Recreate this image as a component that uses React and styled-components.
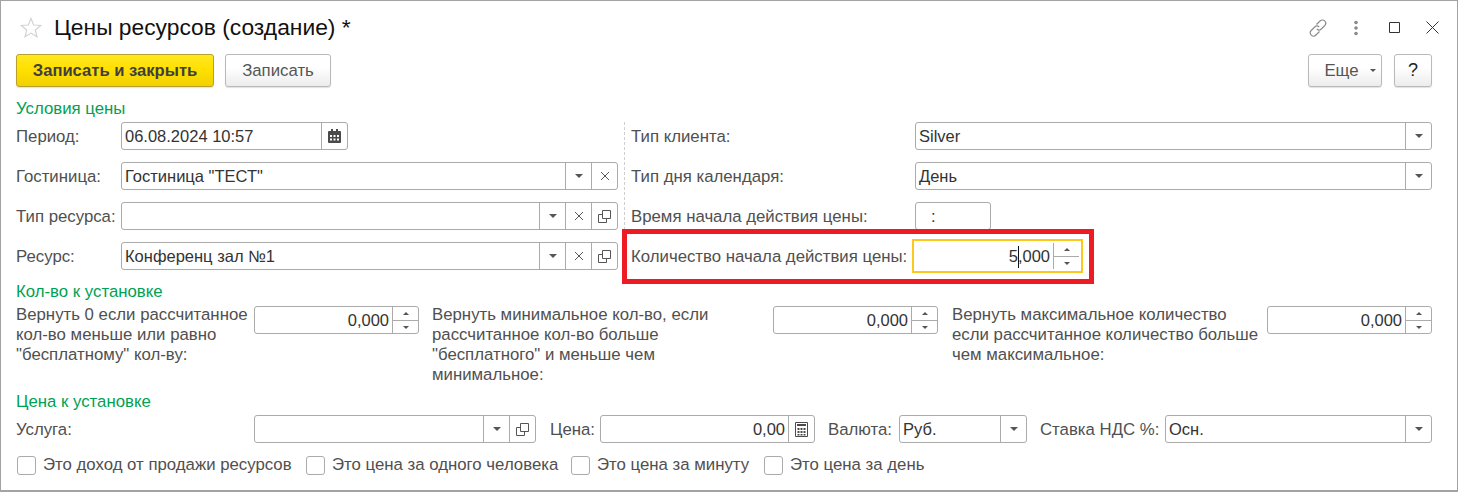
import React from "react";
import styled, { createGlobalStyle } from "styled-components";

const Global = createGlobalStyle`
  html, body { margin: 0; padding: 0; background: #fff; }
  * { box-sizing: border-box; }
  body { font-family: "Liberation Sans", Arial, sans-serif; font-size: 16.8px; color: #505050; }
`;

const Window = styled.div`
  width: 1458px;
  height: 492px;
  border: 1px solid #a3a3a3;
  border-bottom-width: 2px;
  padding: 0 25px 0 15px;
  overflow: hidden;
`;
const Header = styled.div`
  height: 53px;
  display: flex;
  align-items: center;
  padding-left: 4px;
`;
const Title = styled.h1`
  margin: 0 0 0 12px;
  font-size: 22.8px;
  font-weight: 400;
  color: #111;
  flex: 1;
  white-space: nowrap;
`;
const WinIcons = styled.div`
  display: flex;
  align-items: center;
  margin-right: -19px;
`;
const WinIcon = styled.div`
  width: 38px;
  height: 20px;
  display: flex;
  align-items: center;
  justify-content: center;
`;
const Toolbar = styled.div`
  display: flex;
  height: 33px;
`;
const Button = styled.div`
  height: 33px;
  display: flex;
  align-items: center;
  justify-content: center;
  gap: 11px;
  width: ${(p) => p.$w}px;
  margin-left: ${(p) => p.$ml || 0}px;
  padding-left: ${(p) => p.$pl || 0}px;
  border: 1px solid #b9b9b9;
  border-radius: 3px;
  background: linear-gradient(#fff 40%, #ececec);
  box-shadow: 0 1px 1px rgba(0, 0, 0, 0.12);
  color: #555;
  white-space: nowrap;
`;
const PrimaryButton = styled(Button)`
  border-color: #b8a12a;
  background: linear-gradient(#ffe81f, #ffdf00 50%, #f1d000);
  font-size: 16.6px;
  font-weight: 700;
  color: #3f3f3f;
`;
const HelpButton = styled(Button)`
  font-size: 18px;
  color: #222;
`;
const Spacer = styled.div`
  flex: 1;
`;
const Heading = styled.div`
  color: #00a152;
  height: 17px;
  line-height: 17px;
  margin-top: ${(p) => p.$mt}px;
`;
const Conditions = styled.div`
  display: grid;
  grid-template-columns: 602px 1fr;
  margin-top: 5px;
`;
const Column = styled.div`
  display: flex;
  flex-direction: column;
  gap: 12px;
  padding-bottom: 4px;
`;
const RightColumn = styled(Column)`
  position: relative;
  margin-left: 6px;
  padding-left: 6px;
  border-left: 1px dashed #cfcfcf;
  margin-bottom: 4px;
  padding-bottom: 0;
`;
const Row = styled.div`
  display: grid;
  grid-template-columns: ${(p) => p.$cols};
  height: 28px;
  align-items: center;
`;
const PriceRow = styled(Row)`
  margin-top: 5px;
`;
const Label = styled.div`
  padding-left: ${(p) => p.$pl ?? 0}px;
  padding-top: 2px;
  white-space: nowrap;
`;
const Field = styled.div`
  display: flex;
  height: 28px;
  width: ${(p) => (p.$w ? p.$w + "px" : "auto")};
  border: 1px solid #ababab;
  border-radius: 3px;
  background: #fff;
`;
const FocusField = styled(Field)`
  border: 2px solid #fcc81e;
  border-radius: 0;
  height: 34px;
  margin: -3px 0 -3px -3px;
`;
const Value = styled.div`
  flex: 1;
  min-width: 0;
  padding: 0 3px 0 ${(p) => p.$pl ?? 3}px;
  font-size: 16.5px;
  line-height: 26px;
  color: #333;
  white-space: nowrap;
  text-align: ${(p) => (p.$right ? "right" : "left")};
`;
const FocusValue = styled(Value)`
  line-height: 30px;
`;
const Addon = styled.div`
  width: 26px;
  flex: none;
  border-left: 1px solid #ababab;
  display: flex;
  align-items: center;
  justify-content: center;
`;
const Spin = styled.div`
  width: 26px;
  flex: none;
  border-left: 1px solid #ababab;
  display: grid;
  grid-template-rows: 1fr 1fr;
`;
const FocusSpin = styled(Spin)`
  margin: 2px 2px 2px 0;
`;
const SpinPart = styled.div`
  display: flex;
  align-items: center;
  justify-content: center;
  border-top: ${(p) => (p.$sep ? "1px solid #ababab" : "none")};
`;
const Caret = styled.span`
  display: inline-block;
  width: 1px;
  height: 22px;
  margin-right: -1px;
  vertical-align: -6px;
  background: #111;
`;
const Highlight = styled.div`
  position: absolute;
  left: -3px;
  top: 107px;
  width: 472px;
  height: 55px;
  border: 5px solid #ed1c24;
  pointer-events: none;
`;
const Quantities = styled.div`
  display: grid;
  grid-template-columns: 238px 165px 354px 165px 329px 165px;
  height: 93px;
  padding-top: 6px;
`;
const MultiLabel = styled.div`
  line-height: 20px;
  margin-top: -1px;
  padding-left: ${(p) => p.$pl || 0}px;
  white-space: pre-line;
`;
const Checks = styled.div`
  display: flex;
  align-items: center;
  height: 20px;
  margin-top: 12px;
  padding-left: 1px;
`;
const CheckItem = styled.div`
  display: flex;
  align-items: center;
  width: ${(p) => p.$w}px;
  white-space: nowrap;
`;
const Box = styled.span`
  width: 19px;
  height: 19px;
  border: 1px solid #ababab;
  border-radius: 3px;
  margin-right: 7px;
  flex: none;
`;

const Tri = () => (
  <svg width="8" height="4" viewBox="0 0 8 4">
    <path d="M0 0H8L4 4Z" fill="#555" />
  </svg>
);
const Small = ({ up }) => (
  <svg width="6" height="3" viewBox="0 0 6 3">
    <path d={up ? "M0 3L3 0L6 3Z" : "M0 0H6L3 3Z"} fill="#555" />
  </svg>
);
const Cross = () => (
  <svg width="10" height="10" viewBox="0 0 10 10">
    <path d="M1 1L9 9M9 1L1 9" stroke="#555" strokeWidth="1" fill="none" />
  </svg>
);
const Open = () => (
  <svg width="13" height="13" viewBox="0 0 13 13" fill="none" stroke="#555">
    <path d="M4.5 .5H12.5V8.5H4.5Z" />
    <path d="M4.5 4.5H.5V12.5H8.5V8.5" />
  </svg>
);
const CalendarIcon = () => (
  <svg width="13" height="14" viewBox="0 0 13 14">
    <path d="M1 2H12a1 1 0 0 1 1 1V13a1 1 0 0 1-1 1H1a1 1 0 0 1-1-1V3a1 1 0 0 1 1-1Z" fill="#4a4a4a" />
    <path d="M3 0h2v3H3zM8 0h2v3H8z" fill="#4a4a4a" />
    <path d="M2 6h2v2H2zM5.500 6h2v2h-2zM9 6h2v2H9zM2 9.500h2v2H2zM5.500 9.500h2v2h-2zM9 9.500h2v2H9z" fill="#fff" />
  </svg>
);
const CalcIcon = () => (
  <svg width="13" height="15" viewBox="0 0 13 15">
    <path d="M.5 .5H12.500V14.500H.5Z" fill="#fff" stroke="#4a4a4a" />
    <path d="M2 2H11V4H2ZM2.500 6h2v2h-2zM5.500 6h2v2h-2zM8.500 6h2v2h-2zM2.500 9h2v2h-2zM5.500 9h2v2h-2zM8.500 9h2v2h-2zM2.500 12h2v1.500h-2zM5.500 12h2v1.500h-2zM8.500 12h2v1.500h-2z" fill="#4a4a4a" />
  </svg>
);

const Select = ({ w, value, clear, open }) => (
  <Field $w={w}>
    <Value>{value}</Value>
    <Addon><Tri /></Addon>
    {clear && <Addon><Cross /></Addon>}
    {open && <Addon><Open /></Addon>}
  </Field>
);
const SpinParts = () => (
  <>
    <SpinPart><Small up /></SpinPart>
    <SpinPart $sep><Small /></SpinPart>
  </>
);
const NumberField = ({ value }) => (
  <Field>
    <Value $right>{value}</Value>
    <Spin><SpinParts /></Spin>
  </Field>
);

export default function App() {
  return (
    <Window>
      <Global />
      <Header>
        <svg width="22" height="21" viewBox="0 0 23 22">
          <path d="M11.500 1.500L14.300 8.400L21.700 8.900L16 13.600L17.800 20.800L11.500 16.900L5.200 20.800L7 13.600L1.300 8.900L8.700 8.400Z" fill="none" stroke="#d2d2d2" strokeWidth="1.200" />
        </svg>
        <Title>Цены ресурсов (создание) *</Title>
        <WinIcons>
          <WinIcon>
            <svg width="20" height="20" viewBox="0 0 20 20" fill="none" stroke="#8a8a8a" strokeWidth="1.100">
              <path d="M8.500 6.500L12 3a3.200 3.200 0 0 1 4.800 4.500L13.300 11a3.200 3.200 0 0 1-4.500 0" />
              <path d="M11.500 13.500L8 17a3.200 3.200 0 0 1-4.800-4.500L6.700 9a3.200 3.200 0 0 1 4.500 0" />
            </svg>
          </WinIcon>
          <WinIcon>
            <svg width="4" height="16" viewBox="0 0 4 16">
              <circle cx="2" cy="2.500" r="1.800" fill="#8a8a8a" />
              <circle cx="2" cy="8" r="1.800" fill="#8a8a8a" />
              <circle cx="2" cy="13.500" r="1.800" fill="#8a8a8a" />
            </svg>
          </WinIcon>
          <WinIcon>
            <svg width="11" height="11" viewBox="0 0 11 11">
              <path d="M.5 .5H10.500V10.500H.5Z" fill="none" stroke="#333" />
            </svg>
          </WinIcon>
          <WinIcon>
            <svg width="13" height="13" viewBox="0 0 13 13">
              <path d="M.5 .5L12.500 12.500M12.500 .5L.5 12.500" fill="none" stroke="#333" />
            </svg>
          </WinIcon>
        </WinIcons>
      </Header>
      <Toolbar>
        <PrimaryButton $w={198}>Записать и закрыть</PrimaryButton>
        <Button $w={106} $ml={11}>Записать</Button>
        <Spacer />
        <Button $w={74} $pl={10}>Еще <Small /></Button>
        <HelpButton $w={38} $ml={12}>?</HelpButton>
      </Toolbar>

      <Heading $mt={13}>Условия цены</Heading>
      <Conditions>
        <Column>
          <Row $cols="105px 1fr">
            <Label>Период:</Label>
            <Field $w={227}>
              <Value>06.08.2024 10:57</Value>
              <Addon><CalendarIcon /></Addon>
            </Field>
          </Row>
          <Row $cols="105px 1fr">
            <Label>Гостиница:</Label>
            <Select value='Гостиница "ТЕСТ"' clear />
          </Row>
          <Row $cols="105px 1fr">
            <Label>Тип ресурса:</Label>
            <Select clear open />
          </Row>
          <Row $cols="105px 1fr">
            <Label>Ресурс:</Label>
            <Select value="Конференц зал №1" clear open />
          </Row>
        </Column>
        <RightColumn>
          <Row $cols="284px 517px">
            <Label>Тип клиента:</Label>
            <Select value="Silver" />
          </Row>
          <Row $cols="284px 517px">
            <Label>Тип дня календаря:</Label>
            <Select value="День" />
          </Row>
          <Row $cols="284px 76px">
            <Label>Время начала действия цены:</Label>
            <Field>
              <Value $pl={15}>:</Value>
            </Field>
          </Row>
          <Row $cols="284px 168px">
            <Label>Количество начала действия цены:</Label>
            <FocusField>
              <FocusValue $right>5<Caret />,000</FocusValue>
              <FocusSpin><SpinParts /></FocusSpin>
            </FocusField>
          </Row>
          <Highlight />
        </RightColumn>
      </Conditions>

      <Heading $mt={9}>Кол-во к установке</Heading>
      <Quantities>
        <MultiLabel>{'Вернуть 0 если рассчитанное\nкол-во меньше или равно\n"бесплатному" кол-ву:'}</MultiLabel>
        <NumberField value="0,000" />
        <MultiLabel $pl={13}>{'Вернуть минимальное кол-во, если\nрассчитанное кол-во больше\n"бесплатного" и меньше чем\nминимальное:'}</MultiLabel>
        <NumberField value="0,000" />
        <MultiLabel $pl={14}>{'Вернуть максимальное количество\nесли рассчитанное количество больше\nчем максимальное:'}</MultiLabel>
        <NumberField value="0,000" />
      </Quantities>

      <Heading $mt={0}>Цена к установке</Heading>
      <PriceRow $cols="238px 282px 64px 215px 84px 128px 138px 267px">
        <Label>Услуга:</Label>
        <Select open />
        <Label $pl={14}>Цена:</Label>
        <Field>
          <Value $right>0,00</Value>
          <Addon><CalcIcon /></Addon>
        </Field>
        <Label $pl={13}>Валюта:</Label>
        <Select value="Руб." />
        <Label $pl={13}>Ставка НДС %:</Label>
        <Select value="Осн." />
      </PriceRow>
      <Checks>
        <CheckItem $w={289}><Box />Это доход от продажи ресурсов</CheckItem>
        <CheckItem $w={265}><Box />Это цена за одного человека</CheckItem>
        <CheckItem $w={193}><Box />Это цена за минуту</CheckItem>
        <CheckItem $w={180}><Box />Это цена за день</CheckItem>
      </Checks>
    </Window>
  );
}
